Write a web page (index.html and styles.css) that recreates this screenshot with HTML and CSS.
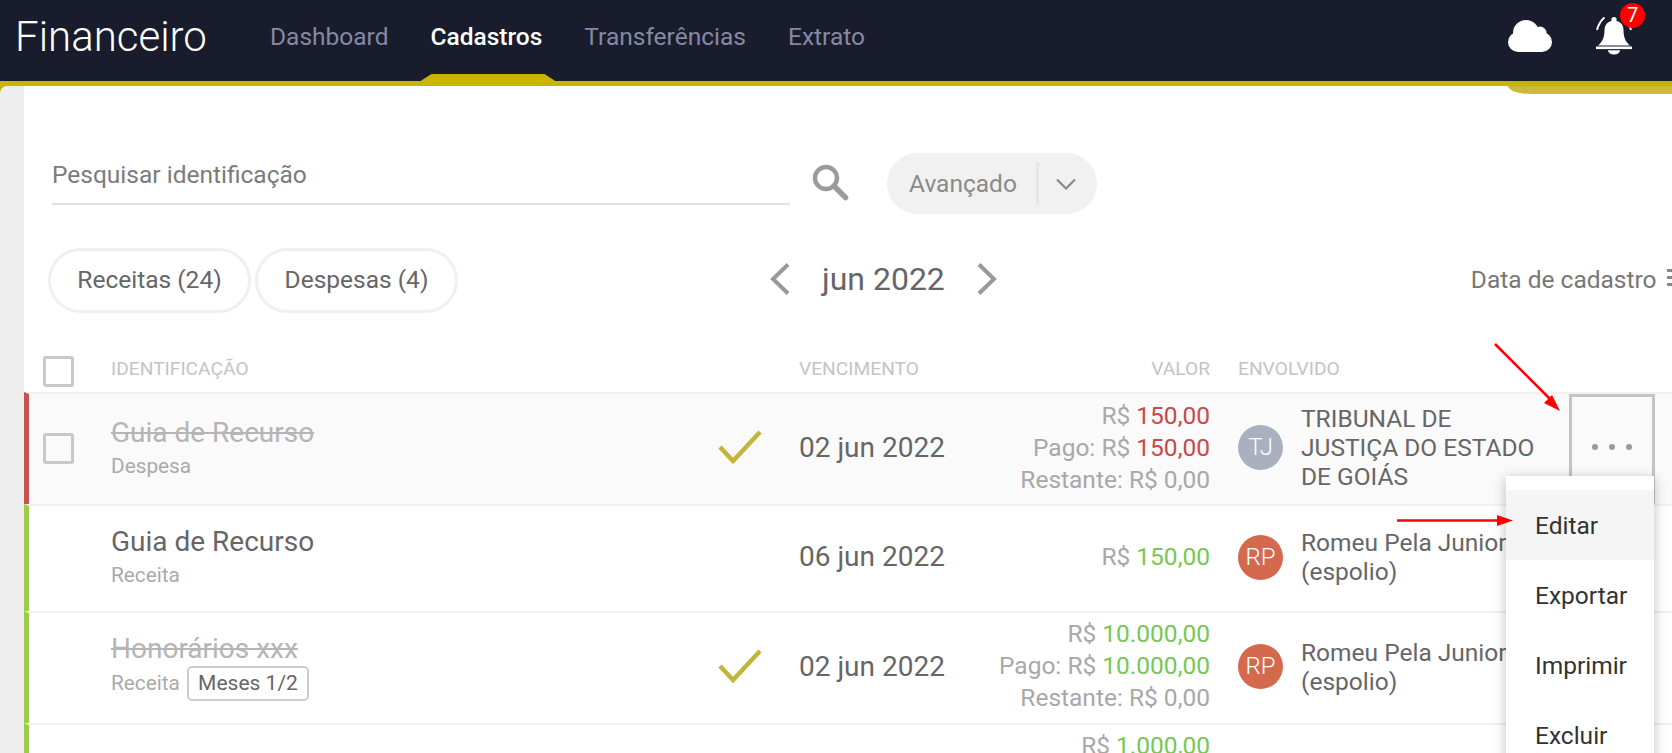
FILE: index.html
```html
<!DOCTYPE html>
<html lang="pt-BR">
<head>
    <meta charset="UTF-8">
    <meta name="viewport" content="width=device-width, initial-scale=1.0">
    <title>Financeiro</title>
    <link rel="stylesheet" href="styles.css">
</head>
<body>
    <div class="page">
        <header class="topbar">
            <div class="brand">Financeiro</div>
            <nav class="nav">
                <a href="#">Dashboard</a>
                <a href="#" class="active">Cadastros</a>
                <a href="#">Transferências</a>
                <a href="#">Extrato</a>
            </nav>
            <div class="top-icons">
                <svg class="cloud" width="44" height="32" viewBox="0 0 44 32" fill="#fff">
                    <circle cx="10" cy="22" r="10"/>
                    <circle cx="18" cy="13" r="13"/>
                    <circle cx="32" cy="13" r="6.5"/>
                    <circle cx="34" cy="22" r="10"/>
                    <rect x="10" y="20" width="24" height="12"/>
                </svg>
                <div class="bell">
                    <svg width="40" height="41" viewBox="0 0 40 41" fill="#fff">
                        <circle cx="20" cy="4.5" r="2.6"/>
                        <path d="M4 30.5C8 27 10.5 23 10.5 15 10.5 9 15 5.5 20 5.5S29.5 9 29.5 15C29.5 23 32 27 36 30.5Z"/>
                        <rect x="2" y="31.5" width="36" height="2.6"/>
                        <path d="M14 35.2a6 4.4 0 0 0 12 0Z"/>
                        <path d="M3 15Q5 7 10.5 2.5" fill="none" stroke="#fff" stroke-width="2"/>
                        <path d="M37 15Q36 11 34 8" fill="none" stroke="#fff" stroke-width="2"/>
                    </svg>
                    <span class="badge">7</span>
                </div>
            </div>
        </header>
        <div class="cloud-tab"></div>

        <div class="main">
            <div class="gutter"></div>
            <div class="content">
                <div class="search-row">
                    <input class="search-input" type="text" placeholder="Pesquisar identificação">
                    <svg class="search-icon" width="40" height="40" viewBox="0 0 40 40" fill="none" stroke="#9b9b9b">
                        <circle cx="16" cy="14" r="11" stroke-width="4.5"/>
                        <path d="M24 22 35.500 33.500" stroke-width="5.500" stroke-linecap="round"/>
                    </svg>
                    <div class="advanced">
                        <span class="advanced-label">Avançado</span>
                        <span class="advanced-toggle">
                            <svg width="20" height="12" viewBox="0 0 20 12" fill="none" stroke="#8a8a8a" stroke-width="2.200">
                                <path d="M1 1.500 10 10.500 19 1.500"/>
                            </svg>
                        </span>
                    </div>
                </div>

                <div class="filter-row">
                    <button class="pill">Receitas (24)</button>
                    <button class="pill">Despesas (4)</button>
                    <div class="month">
                        <svg width="20" height="32" viewBox="0 0 20 32" fill="none" stroke="#999" stroke-width="4">
                            <path d="M18 1.500 3 16 18 30.500"/>
                        </svg>
                        <span class="month-label">jun 2022</span>
                        <svg width="20" height="32" viewBox="0 0 20 32" fill="none" stroke="#999" stroke-width="4">
                            <path d="M2 1.500 17 16 2 30.500"/>
                        </svg>
                    </div>
                    <div class="sort">
                        <span>Data de cadastro</span>
                        <span class="sort-icon"><i></i><i></i><i></i></span>
                    </div>
                </div>

                <div class="table-head">
                    <span class="checkbox"></span>
                    <span>IDENTIFICAÇÃO</span>
                    <span></span>
                    <span>VENCIMENTO</span>
                    <span class="right">VALOR</span>
                    <span class="head-person">ENVOLVIDO</span>
                </div>

                <div class="row row-first expense done">
                    <span class="checkbox row-check"></span>
                    <div>
                        <div class="title">Guia de Recurso</div>
                        <div class="sub">Despesa</div>
                    </div>
                    <svg class="paid" width="44" height="34" viewBox="0 0 44 34" fill="none" stroke="#c4b53a" stroke-width="4.500">
                        <path d="M2 17 15 31 42 2"/>
                    </svg>
                    <div class="date">02 jun 2022</div>
                    <div class="value">
                        <div>R$ <b class="red">150,00</b></div>
                        <div>Pago: R$ <b class="red">150,00</b></div>
                        <div>Restante: R$ 0,00</div>
                    </div>
                    <div class="person">
                        <span class="avatar grey">TJ</span>
                        <span class="name">TRIBUNAL DE JUSTIÇA DO ESTADO DE GOIÁS</span>
                    </div>
                    <div class="actions">
                        <div class="more"><i></i><i></i><i></i></div>
                        <ul class="menu">
                            <li class="hover">Editar</li>
                            <li>Exportar</li>
                            <li>Imprimir</li>
                            <li>Excluir</li>
                        </ul>
                    </div>
                </div>

                <div class="row row-second income">
                    <span></span>
                    <div>
                        <div class="title">Guia de Recurso</div>
                        <div class="sub">Receita</div>
                    </div>
                    <span></span>
                    <div class="date">06 jun 2022</div>
                    <div class="value">
                        <div>R$ <b class="green">150,00</b></div>
                    </div>
                    <div class="person">
                        <span class="avatar orange">RP</span>
                        <span class="name">Romeu Pela Junior (espolio)</span>
                    </div>
                </div>

                <div class="row row-third income done">
                    <span></span>
                    <div class="title-block">
                        <div class="title">Honorários xxx</div>
                        <div class="sub">Receita <span class="tag">Meses 1/2</span></div>
                    </div>
                    <svg class="paid" width="44" height="34" viewBox="0 0 44 34" fill="none" stroke="#c4b53a" stroke-width="4.500">
                        <path d="M2 17 15 31 42 2"/>
                    </svg>
                    <div class="date">02 jun 2022</div>
                    <div class="value value-up">
                        <div>R$ <b class="green">10.000,00</b></div>
                        <div>Pago: R$ <b class="green">10.000,00</b></div>
                        <div>Restante: R$ 0,00</div>
                    </div>
                    <div class="person">
                        <span class="avatar orange">RP</span>
                        <span class="name">Romeu Pela Junior (espolio)</span>
                    </div>
                </div>

                <div class="row row-third income">
                    <span></span>
                    <div class="title title-low">Custas de cartório</div>
                    <span></span>
                    <span></span>
                    <div class="value value-up">
                        <div>R$ <b class="green">1.000,00</b></div>
                    </div>
                </div>
            </div>
        </div>

        <!-- setas vermelhas da anotação -->
        <svg class="notes" width="1672" height="753" viewBox="0 0 1672 753">
            <path d="M1495 344 1552 401" stroke="#f00" stroke-width="2.500"/>
            <path d="M1560 411 1544 403 1552 395Z" fill="#f00"/>
            <path d="M1397 520.500H1500" stroke="#f00" stroke-width="2.500"/>
            <path d="M1513 520.500 1497 515V526Z" fill="#f00"/>
        </svg>
    </div>
</body>
</html>
```

FILE: styles.css
```css
* {
    box-sizing: border-box;
}

html, body {
    margin: 0;
    padding: 0;
    height: 100%;
    overflow: hidden;
}

body {
    font-family: Roboto, "Liberation Sans", sans-serif;
    background-color: #fff;
    color: #666;
}

.page {
    position: relative;
    height: 753px;
    overflow: hidden;
}

/* barra superior */
.topbar {
    position: relative;
    z-index: 2;
    display: flex;
    align-items: flex-start;
    height: 86px;
    background-color: #181c2c;
    border-bottom: 5px solid #c9b500;
}

.brand {
    margin: 13px 0 0 15px;
    width: 255px;
    font-size: 42px;
    font-weight: 300;
    line-height: 48px;
    color: #fff;
}

.nav {
    display: flex;
    gap: 42px;
    padding-top: 22px;
}

.nav a {
    position: relative;
    font-size: 24.500px;
    line-height: 30px;
    color: #8589a3;
    text-decoration: none;
}

.nav a.active {
    font-weight: 500;
    color: #fff;
}

.nav a.active::after {
    content: "";
    position: absolute;
    left: -10px;
    right: -13px;
    top: 52px;
    height: 7px;
    background-color: #c9b500;
    clip-path: polygon(0 100%, 11px 0, calc(100% - 11px) 0, 100% 100%);
}

.top-icons {
    display: flex;
    align-items: flex-start;
    gap: 42px;
    margin-left: auto;
    padding: 20px 38px 0 0;
}

.bell {
    position: relative;
    margin-top: -5px;
}

.badge {
    position: absolute;
    top: -12px;
    left: 26px;
    width: 25px;
    height: 25px;
    border-radius: 50%;
    background-color: #f00;
    color: #fff;
    font-size: 20px;
    line-height: 25px;
    text-align: center;
}

.cloud-tab {
    position: absolute;
    z-index: 1;
    top: 86px;
    left: 1508px;
    right: 0;
    height: 8px;
    background-color: #cbb93a;
    border-radius: 0 0 0 24px / 0 0 0 8px;
}

/* conteudo */
.main {
    display: flex;
    background-color: #c9b500;
    height: 667px;
}

.gutter {
    width: 24px;
    background-color: #eee;
    border-top-left-radius: 7px;
}

.content {
    flex: 1;
    min-width: 0;
    background-color: #fff;
}

.search-row {
    display: flex;
    align-items: center;
    padding: 67px 0 0 28px;
}

.search-input {
    width: 738px;
    height: 51px;
    margin-top: -9px;
    padding: 0 0 7px;
    border: none;
    border-bottom: 2px solid #e3e3e3;
    outline: none;
    font-family: inherit;
    font-size: 24.500px;
}

.search-input::placeholder {
    color: #7b7b7b;
    opacity: 1;
}

.search-icon {
    margin-left: 20px;
}

.advanced {
    display: flex;
    align-items: center;
    height: 61px;
    margin-left: 37px;
    width: 210px;
    background-color: #f1f1f1;
    border-radius: 31px;
}

.advanced-label {
    width: 152px;
    height: 43px;
    padding-left: 22px;
    border-right: 3px solid #e6e6e6;
    font-size: 24.500px;
    line-height: 43px;
    color: #8a8a8a;
}

.advanced-toggle {
    display: flex;
    padding-left: 17px;
}

.filter-row {
    display: flex;
    align-items: center;
    height: 65px;
    margin-top: 34px;
    padding-left: 24px;
    gap: 4px;
    white-space: nowrap;
}

.pill {
    flex: none;
    width: 203px;
    height: 65px;
    padding: 0 0 2px;
    background: #fff;
    border: 3px solid #f0f0f0;
    border-radius: 33px;
    font-family: inherit;
    font-size: 24.500px;
    color: #666;
}

.month {
    flex: none;
    display: flex;
    align-items: center;
    gap: 32px;
    margin-left: 308px;
    margin-top: -4px;
}

.month-label {
    font-size: 32px;
    color: #666;
}

.sort {
    flex: none;
    display: flex;
    align-items: center;
    gap: 10px;
    margin-left: 470px;
    margin-top: -2px;
    font-size: 24.500px;
    color: #777;
}

.sort-icon {
    display: flex;
    flex-direction: column;
    gap: 4px;
    margin-top: -5px;
}

.sort-icon i {
    display: block;
    width: 14px;
    height: 3px;
    background-color: #888;
}

/* tabela */
.table-head,
.row {
    display: grid;
    grid-template-columns: 68px 607px 81px 160px 251px 359px 86px;
    align-items: center;
    border-left: 5px solid transparent;
    padding-left: 14px;
}

.table-head {
    height: 36px;
    margin-top: 43px;
    font-size: 19.200px;
    color: #c4c4c4;
    align-items: start;
    line-height: 26px;
}

.head-person {
    padding-left: 28px;
}

.right {
    text-align: right;
}

.checkbox {
    display: block;
    width: 31px;
    height: 31px;
    border: 3px solid #c8c8c8;
    border-radius: 3px;
}

.row-check {
    margin-bottom: 2px;
}

.paid {
    margin-bottom: 4px;
}

.row {
    border-top: 2px solid #f0f0f0;
}

.row-first {
    height: 112px;
    background-color: #fafafa;
}

.row-second {
    height: 107px;
}

.row-third {
    height: 112px;
}

.expense {
    border-left-color: #c9524f;
}

.income {
    border-left-color: #9ccb4e;
}

.title {
    font-size: 28px;
    line-height: 32px;
    color: #666;
}

.done .title {
    color: #b5b5b5;
    text-decoration: line-through;
}

.title-block {
    margin-bottom: 3px;
}

.title-low {
    align-self: start;
    margin-top: 24px;
}

.sub {
    margin-top: 1px;
    font-size: 20.800px;
    line-height: 32px;
    color: #aaa;
}

.tag {
    display: inline-block;
    height: 35px;
    margin-left: 2px;
    padding: 0 9px;
    border: 2px solid #ccc;
    border-radius: 5px;
    font-size: 21px;
    line-height: 31px;
    color: #666;
}

.date {
    padding-bottom: 4px;
    font-size: 28px;
    color: #666;
}

.value {
    align-self: start;
    padding-top: 6px;
    font-size: 24.500px;
    line-height: 32px;
    text-align: right;
    color: #a8a8a8;
}

.value-up {
    padding-top: 5px;
}

.row-second .value {
    align-self: center;
    padding-top: 0;
    padding-bottom: 3px;
}

.value b {
    font-weight: 400;
}

.red {
    color: #c9484a;
}

.green {
    color: #76c94f;
}

.person {
    display: flex;
    align-items: center;
    gap: 18px;
    padding-left: 28px;
    padding-bottom: 3px;
}

.avatar {
    flex: none;
    width: 45px;
    height: 45px;
    border-radius: 50%;
    color: #fff;
    font-size: 24px;
    font-weight: 300;
    line-height: 45px;
    text-align: center;
}

.grey {
    background-color: #a9b1bf;
}

.orange {
    background-color: #d4694e;
}

.name {
    max-width: 240px;
    font-size: 24.500px;
    line-height: 29px;
    color: #666;
}

.actions {
    position: relative;
    align-self: stretch;
}

.more {
    display: flex;
    justify-content: center;
    align-items: center;
    gap: 11px;
    height: 100%;
    padding-bottom: 4px;
    border: 3px solid #c4c4c4;
}

.more i {
    display: block;
    width: 6px;
    height: 6px;
    border-radius: 50%;
    background-color: #9a9a9a;
}

.menu {
    position: absolute;
    top: 82px;
    right: 1px;
    z-index: 3;
    width: 148px;
    margin: 0;
    padding: 14px 0 0;
    list-style: none;
    background-color: #fff;
    box-shadow: 0 2px 12px rgba(0, 0, 0, 0.25);
}

.menu li {
    height: 70px;
    padding-left: 29px;
    font-size: 24.500px;
    line-height: 72px;
    color: #333;
}

.menu li.hover {
    background-color: #f5f5f5;
}

.notes {
    position: absolute;
    top: 0;
    left: 0;
    z-index: 4;
    pointer-events: none;
}
```
